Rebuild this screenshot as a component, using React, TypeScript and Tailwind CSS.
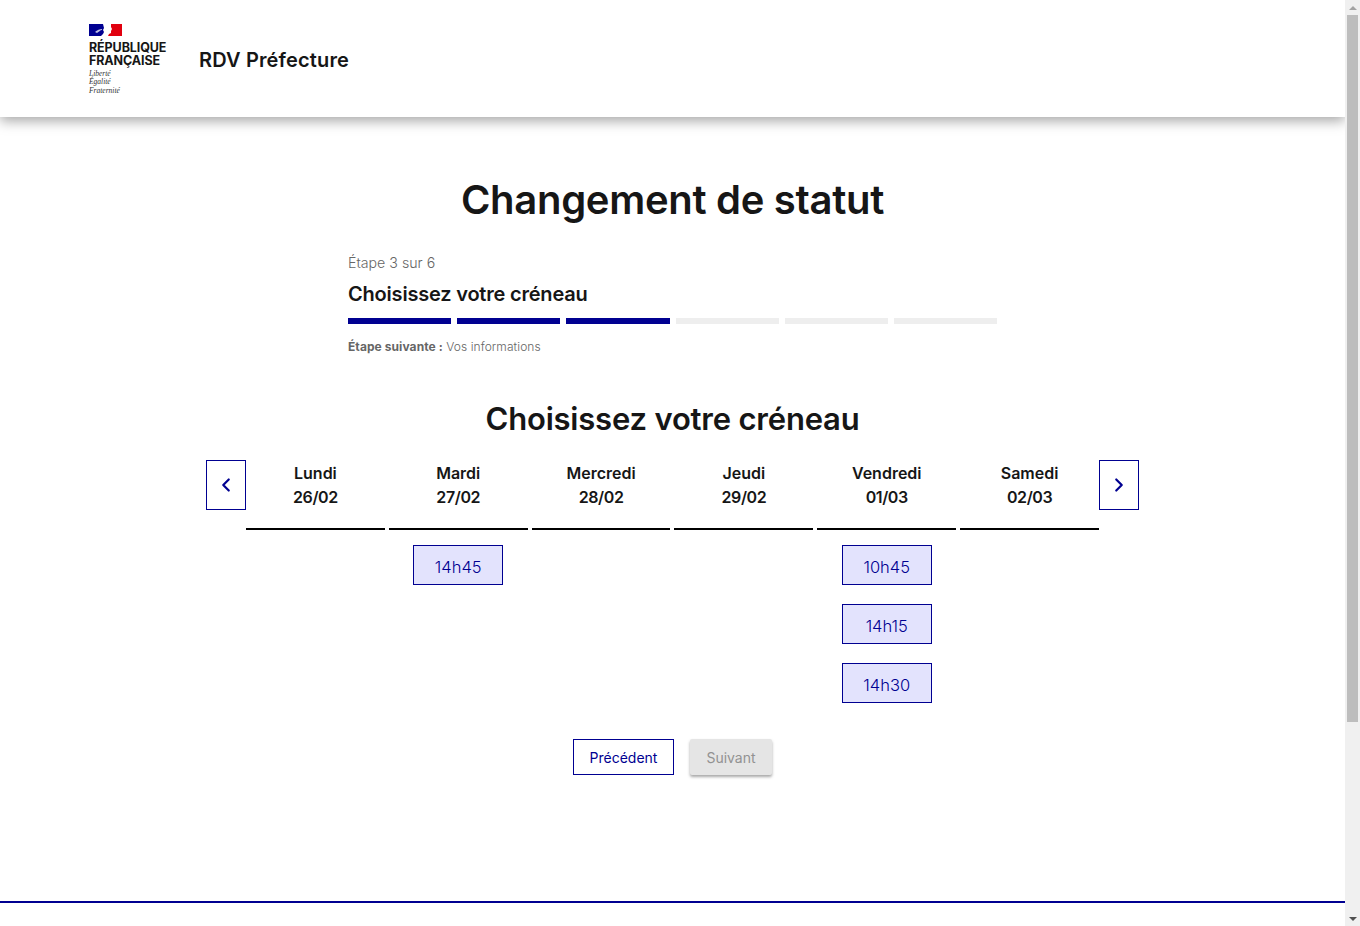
import { ChevronLeft, ChevronRight } from 'lucide-react'

const days = [
  { name: 'Lundi', date: '26/02', slots: [] as string[] },
  { name: 'Mardi', date: '27/02', slots: ['14h45'] },
  { name: 'Mercredi', date: '28/02', slots: [] as string[] },
  { name: 'Jeudi', date: '29/02', slots: [] as string[] },
  { name: 'Vendredi', date: '01/03', slots: ['10h45', '14h15', '14h30'] },
  { name: 'Samedi', date: '02/03', slots: [] as string[] },
]

function Logo() {
  return (
    <div className="flex w-[78px] flex-col pt-[2px]">
      <svg width="33" height="12" viewBox="0 0 33 12" className="block">
        <rect width="33" height="12" fill="#e1000f" />
        <rect width="15" height="12" fill="#000091" />
        <path d="M14 0h8v3l1 2-1 2v2l-2 1-1 2h-7l2-2 1-2-1-2 1-2z" fill="#ffffff" />
        <path d="M6 8c2-2 5-3 7-3v1c-2 0-3 2-5 3z" fill="#ffffff" opacity="0.75" />
      </svg>
      <div className="mt-[5px] text-[12.5px] leading-[13px] font-bold tracking-[-0.1px] text-[#161616]">
        RÉPUBLIQUE
        <br />
        FRANÇAISE
      </div>
      <div className="mt-[3px] font-['Liberation_Serif',serif] text-[7.5px] leading-[8.5px] text-[#333333] italic">
        Liberté
        <br />
        Égalité
        <br />
        Fraternité
      </div>
    </div>
  )
}

function Scrollbar() {
  return (
    <div className="flex h-full w-[15px] shrink-0 flex-col items-center bg-[#f0f0f0]">
      <div className="flex h-[15px] w-full items-center justify-center">
        <div className="h-0 w-0 border-x-[4px] border-b-[4px] border-x-transparent border-b-[#a3a3a3]" />
      </div>
      <div className="h-[707px] w-[11px] bg-[#bdbdbd]" />
      <div className="flex-1" />
      <div className="flex h-[15px] w-full items-center justify-center">
        <div className="h-0 w-0 border-x-[4px] border-t-[4px] border-x-transparent border-t-[#505050]" />
      </div>
    </div>
  )
}

export default function App() {
  return (
    <div className="flex h-screen overflow-hidden bg-white font-['Inter',sans-serif] text-[#161616]">
      <div className="flex min-w-0 flex-1 flex-col">
        <header className="flex h-[117px] shrink-0 items-center gap-[32px] pl-[89px] shadow-[0_4px_12px_rgba(0,0,0,0.35)]">
          <Logo />
          <div className="pt-[2px] text-[20px] font-semibold tracking-[0.15px]">RDV Préfecture</div>
        </header>

        <main className="flex flex-1 flex-col items-center pt-[59px]">
          <h1 className="text-[40px] leading-[48px] font-semibold tracking-[-0.3px]">Changement de statut</h1>

          <div className="mt-[27px] w-[649px]">
            <div className="text-[14.2px] leading-[24px] font-light text-[#666666]">Étape 3 sur 6</div>
            <div className="mt-[5px] text-[20px] leading-[28px] font-semibold tracking-[-0.2px]">Choisissez votre créneau</div>
            <div className="mt-[10px] flex gap-[6px]">
              {[0, 1, 2, 3, 4, 5].map((i) => (
                <div key={i} className={`h-[6px] flex-1 ${i < 3 ? 'bg-[#000091]' : 'bg-[#eeeeee]'}`} />
              ))}
            </div>
            <div className="mt-[13px] text-[12px] leading-[20px] font-light tracking-[0.08px] text-[#666666]">
              <b className="font-bold">Étape suivante :</b> Vos informations
            </div>
          </div>

          <h2 className="mt-[42px] text-[31px] leading-[40px] font-semibold tracking-[-0.2px]">Choisissez votre créneau</h2>

          <div className="mt-[21px] flex w-[933px] items-start">
            <button className="flex h-[50px] w-[40px] shrink-0 items-center justify-center border border-[#000091] text-[#000091]">
              <ChevronLeft size={22} strokeWidth={2.4} />
            </button>
            <div className="grid flex-1 grid-cols-6 gap-x-[4px]">
              {days.map((day) => (
                <div key={day.name} className="flex flex-col items-center">
                  <div className="flex h-[70px] w-full flex-col items-center border-b-2 border-black pt-[1px] text-[16px] leading-[24px] font-semibold">
                    <div>{day.name}</div>
                    <div className="tracking-[-0.4px]">{day.date}</div>
                  </div>
                  <div className="mt-[15px] flex flex-col gap-[19px]">
                    {day.slots.map((slot) => (
                      <button
                        key={slot}
                        className="h-[40px] w-[90px] border border-[#000091] bg-[#e3e3fd] pt-[4px] text-[16.5px] font-light text-[#000091]"
                      >
                        {slot}
                      </button>
                    ))}
                  </div>
                </div>
              ))}
            </div>
            <button className="flex h-[50px] w-[40px] shrink-0 items-center justify-center border border-[#000091] text-[#000091]">
              <ChevronRight size={22} strokeWidth={2.4} />
            </button>
          </div>

          <div className="mt-[36px] flex gap-[16px]">
            <button className="h-[36px] w-[101px] border border-[#000091] text-[14px] text-[#000091]">
              Précédent
            </button>
            <button className="h-[36px] w-[82px] rounded-[2px] bg-[#e5e5e5] text-[14px] text-[#929292] shadow-[0_2px_3px_rgba(0,0,0,0.35)]">
              Suivant
            </button>
          </div>
        </main>

        <footer className="h-[25px] shrink-0 border-t-2 border-[#000091]" />
      </div>
      <Scrollbar />
    </div>
  )
}
